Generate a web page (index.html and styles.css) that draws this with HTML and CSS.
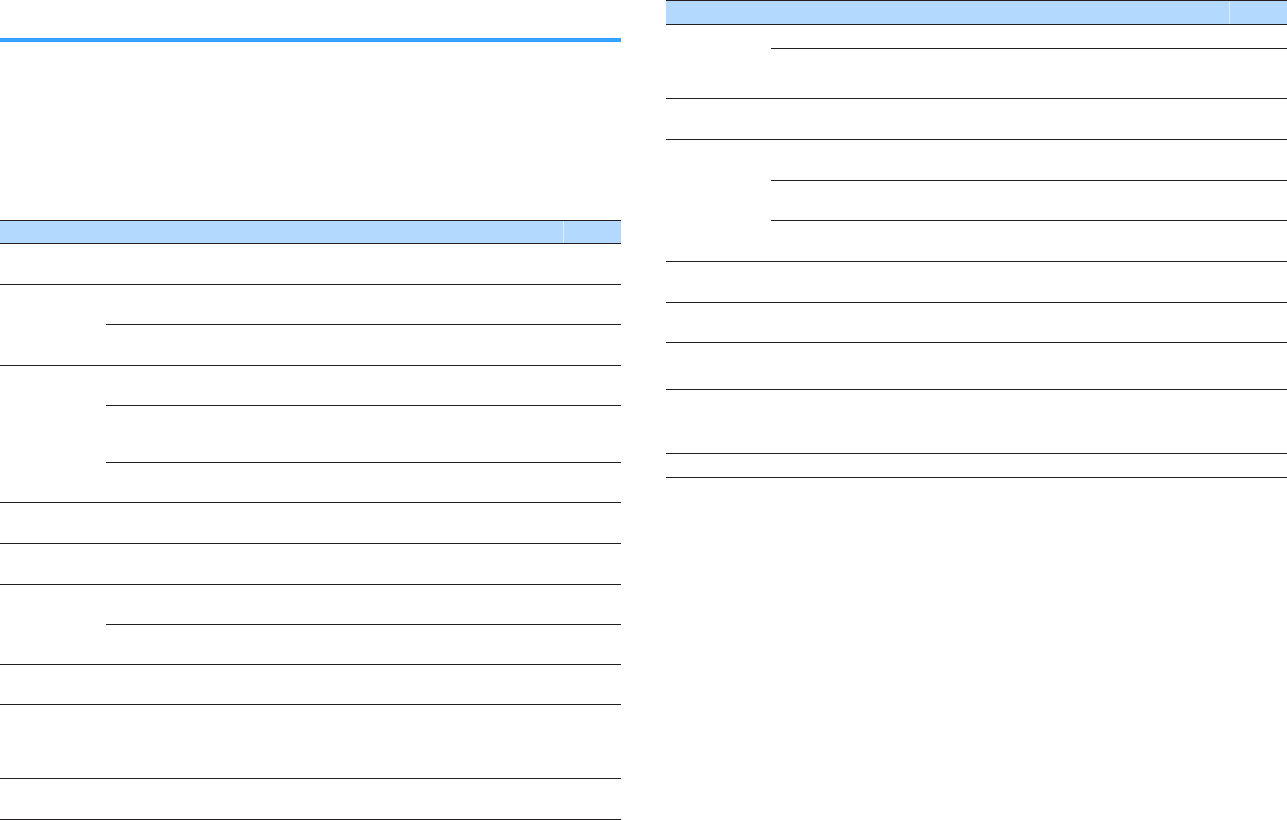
FILE: index.html
```html
<!DOCTYPE html>
<html>
<head>
    <title>Spec table</title>
    <meta name="viewport" content="width=device-width, initial-scale=1.0">
    <link rel="stylesheet" href="styles.css">
</head>
<body>
    <div class="page">
        <!-- Left column -->
        <div class="column left">
            <div class="rule"></div>
            <div class="table">
                <div class="head"><div class="head-main"></div><div class="head-side"></div></div>

                <div class="group"><div class="lead"></div><div class="subs"><div class="sub h41"></div></div></div>
                <div class="group"><div class="lead"></div><div class="subs"><div class="sub h40"></div><div class="sub h41"></div></div></div>
                <div class="group"><div class="lead"></div><div class="subs"><div class="sub h40"></div><div class="sub h57"></div><div class="sub h40"></div></div></div>
                <div class="group"><div class="lead"></div><div class="subs"><div class="sub h41"></div></div></div>
                <div class="group"><div class="lead"></div><div class="subs"><div class="sub h41"></div></div></div>
                <div class="group"><div class="lead"></div><div class="subs"><div class="sub h40"></div><div class="sub h40"></div></div></div>
                <div class="group"><div class="lead"></div><div class="subs"><div class="sub h40"></div></div></div>
                <div class="group"><div class="lead"></div><div class="subs"><div class="sub h74"></div></div></div>
                <div class="group"><div class="lead"></div><div class="subs"><div class="sub h41"></div></div></div>
            </div>
        </div>

        <!-- Right column -->
        <div class="column right">
            <div class="table">
                <div class="head"><div class="head-main"></div><div class="head-side"></div></div>

                <div class="group"><div class="lead"></div><div class="subs"><div class="sub h24"></div><div class="sub h50"></div></div></div>
                <div class="group"><div class="lead"></div><div class="subs"><div class="sub h41"></div></div></div>
                <div class="group"><div class="lead"></div><div class="subs"><div class="sub h41"></div><div class="sub h40"></div><div class="sub h41"></div></div></div>
                <div class="group"><div class="lead"></div><div class="subs"><div class="sub h41"></div></div></div>
                <div class="group"><div class="lead"></div><div class="subs"><div class="sub h40"></div></div></div>
                <div class="group"><div class="lead"></div><div class="subs"><div class="sub h47"></div></div></div>
                <div class="group"><div class="lead"></div><div class="subs"><div class="sub h64"></div></div></div>
                <div class="group"><div class="lead"></div><div class="subs"><div class="sub h24"></div></div></div>
            </div>
        </div>
    </div>
</body>
</html>
```

FILE: styles.css
```css
:root {
    --line: #231f20;
    --head: #b4d9fe;
    --head-split: #d8ebff;
    --accent: #36a2ff;
}

* {
    box-sizing: border-box;
}

body {
    margin: 0;
    background: #ffffff;
    font-family: 'Liberation Sans', Arial, sans-serif;
    font-size: 12px;
    color: var(--line);
    overflow: hidden;
}

.page {
    display: flex;
    gap: 45px;
    width: 1287px;
}

.column {
    flex: 0 0 621px;
}

/* Blue title rule */
.rule {
    height: 4px;
    margin-top: 38px;
    margin-bottom: 178px;
    background: var(--accent);
}

/* Table */
.head {
    display: flex;
    height: 24px;
    border-top: 1px solid var(--line);
    border-bottom: 1px solid var(--line);
    background: var(--head);
}

.head-main {
    flex: 1;
    border-right: 1px solid var(--head-split);
}

.head-side {
    width: 57px;
}

.right .head {
    height: 25px;
}

.right .head-side {
    width: 57px;
}

.group {
    display: flex;
    border-bottom: 1px solid var(--line);
}

.lead {
    width: 106px;
}

.right .lead {
    width: 105px;
}

.subs {
    flex: 1;
    display: flex;
    flex-direction: column;
}

.sub + .sub {
    border-top: 1px solid var(--line);
}

/* row heights, measured line to line */
.sub:first-child { margin-top: -1px; }
.h24 { height: 24px; }
.h40 { height: 40px; }
.h41 { height: 41px; }
.h47 { height: 47px; }
.h50 { height: 50px; }
.h57 { height: 57px; }
.h64 { height: 64px; }
.h74 { height: 74px; }
```
